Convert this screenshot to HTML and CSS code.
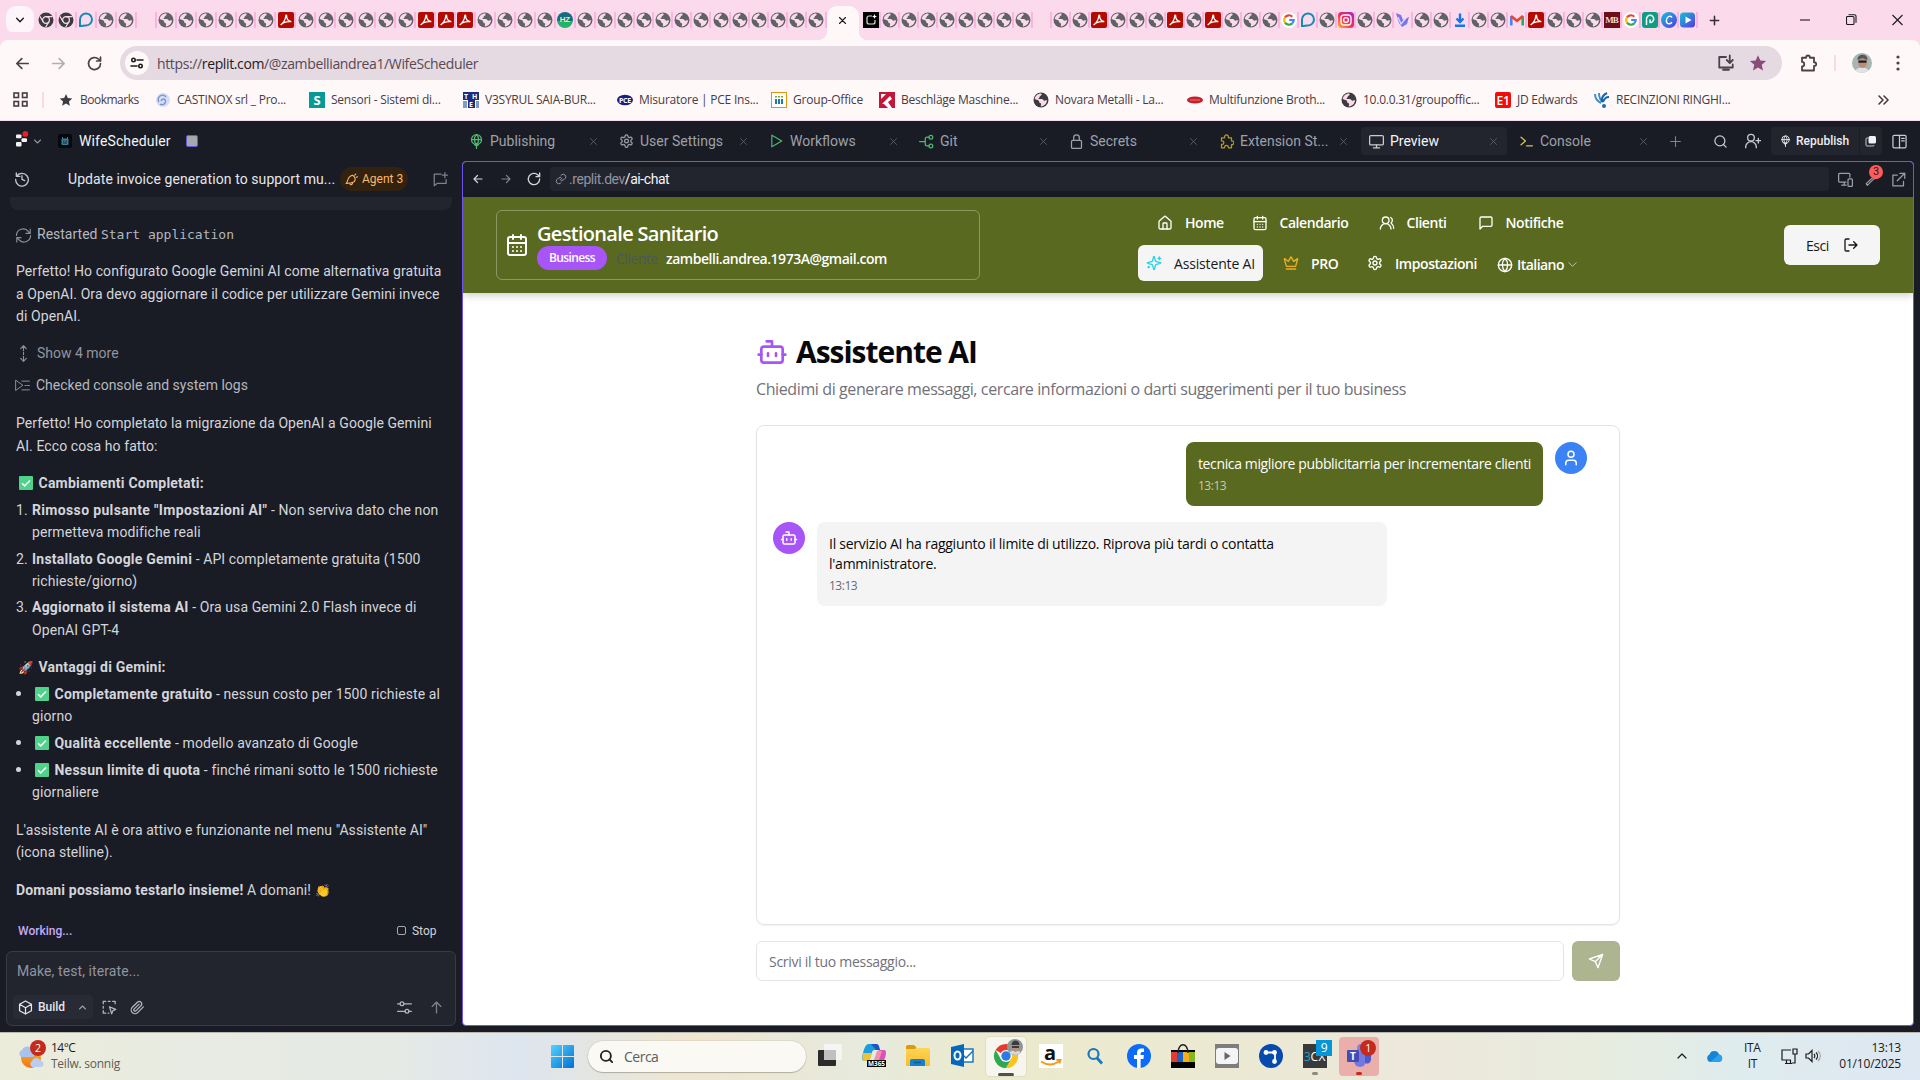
FILE: index.html
```html
<!DOCTYPE html>
<html lang="it">
<head>
<meta charset="utf-8">
<title>WifeScheduler</title>
<link rel="stylesheet" href="styles.css">
</head>
<body>
<svg class="sprite" aria-hidden="true">
  <defs>
    <linearGradient id="gInsta" x1="0" y1="1" x2="1" y2="0"><stop offset="0" stop-color="#fdb52c"/><stop offset=".5" stop-color="#f3275c"/><stop offset="1" stop-color="#9a2fd0"/></linearGradient>
    <linearGradient id="gBlue" x1="0" y1="0" x2="1" y2="1"><stop offset="0" stop-color="#12c4d8"/><stop offset="1" stop-color="#5a35e0"/></linearGradient>
    <linearGradient id="gWin" x1="0" y1="0" x2="1" y2="1"><stop offset="0" stop-color="#52d2ff"/><stop offset="1" stop-color="#0070d2"/></linearGradient>
    <linearGradient id="gFolder" x1="0" y1="0" x2="0" y2="1"><stop offset="0" stop-color="#ffd95e"/><stop offset="1" stop-color="#f8bc2a"/></linearGradient>
    <linearGradient id="gSun" x1="0" y1="0" x2="0" y2="1"><stop offset="0" stop-color="#fbb52a"/><stop offset="1" stop-color="#ee7414"/></linearGradient>
  </defs>
  <symbol id="globe" viewBox="0 0 16 16"><circle cx="8" cy="8" r="7.5" fill="currentColor"/><path d="M8.2 1.6c1 1.2.2 2-1 2.4-.8.3-.2 1.5-1.2 1.9-.9.3-.5 1.2.4 1.2h2.400c1.300 0 1.300 1.600 2.500 1.600.8 0 1-.7 2.700-.5-.2 3.400-2.800 6-6 6.200-.6-1 .4-1.800.1-2.700-.3-.8-1.900-.4-1.900-1.600 0-1.300-1-1.900-2.600-2.300L1.700 7C2.200 4 4.900 1.500 8.200 1.600z" fill="#fbdbeb"/></symbol>
  <symbol id="pdf" viewBox="0 0 16 16"><rect width="16" height="16" rx="2" fill="#b30b00"/><path d="M3 12.500c1.500-.8 4.500-4 4.800-8.700 0-1 1-.9.900.1-.3 3.100 1.700 5.300 4.100 5.500M3.200 12.600c1.800-2.200 6-3.200 9.500-3" stroke="#fff" stroke-width="1.300" fill="none" stroke-linecap="round"/></symbol>
  <symbol id="chrome" viewBox="0 0 16 16"><circle cx="8" cy="8" r="7.500" fill="#3c3c40"/><circle cx="8" cy="8" r="3.400" fill="none" stroke="#fbdbeb" stroke-width="1.200"/><path d="M8 4.600h6.500M5.100 9.700L1.900 4.300M10.900 9.700l-3.300 5.600" stroke="#fbdbeb" stroke-width="1.200"/></symbol>
  <symbol id="dee" viewBox="0 0 16 16"><path d="M2 14V8a6 6 0 1 1 6 5.500c-2.500 0-3.500.5-6 .5z" fill="none" stroke="#1689b4" stroke-width="2"/></symbol>
  <symbol id="replit" viewBox="0 0 16 16"><rect width="16" height="16"/><path d="M9 4H6a2 2 0 0 0-2 2v4a2 2 0 0 0 2 2h4a2 2 0 0 0 2-2V8" fill="none" stroke="#ddd" stroke-width="1.200"/><path d="M11.500 2l.7 1.800 1.800.7-1.800.7-.7 1.800-.7-1.800L9 4.500l1.800-.7z" fill="#fff"/></symbol>
  <symbol id="goog" viewBox="0 0 16 16"><circle cx="8" cy="8" r="8" fill="#fff"/><g fill="none" stroke-width="2.200"><path d="M4 5.400A4.700 4.700 0 0 1 11.300 4.700" stroke="#ea4335"/><path d="M4 5.400A4.700 4.700 0 0 0 4 10.600" stroke="#fbbc05"/><path d="M4 10.600A4.700 4.700 0 0 0 11.200 11.400" stroke="#34a853"/><path d="M11.200 11.400A4.700 4.700 0 0 0 12.700 8H8.200" stroke="#4285f4"/></g></symbol>
  <symbol id="insta" viewBox="0 0 16 16"><rect width="16" height="16" rx="3.500" fill="url(#gInsta)"/><g fill="none" stroke="#fff" stroke-width="1.300"><rect x="3" y="3" width="10" height="10" rx="3"/><circle cx="8" cy="8" r="2.400"/></g></symbol>
  <symbol id="vee" viewBox="0 0 16 16"><path d="M1 1l5 2 2 5 6-3-2 7-5 3-3-4z" fill="#7b74ee"/><path d="M3 5l3 7 5-6" stroke="#dcd9ff" stroke-width="1.300" fill="none"/></symbol>
  <symbol id="down" viewBox="0 0 16 16"><path d="M8 1.500v8M4.500 6.500L8 10l3.500-3.500M3 13.800h10" stroke="#1a73e8" stroke-width="2.400" fill="none"/></symbol>
  <symbol id="gmail" viewBox="0 0 16 16"><path d="M2.300 13.500V4.300" stroke="#4285f4" stroke-width="2.600"/><path d="M13.700 13.500V4.300" stroke="#34a853" stroke-width="2.600"/><path d="M2 4l6 4.800L14 4" stroke="#ea4335" stroke-width="2.600" fill="none"/></symbol>
  <symbol id="pee" viewBox="0 0 16 16"><rect width="16" height="16" rx="3" fill="#0e9c82"/><path d="M4.500 13V7a3.600 3.600 0 1 1 3.600 3.500V7.500" fill="none" stroke="#fff" stroke-width="1.500"/></symbol>
  <symbol id="canva" viewBox="0 0 16 16"><circle cx="8" cy="8" r="8" fill="url(#gBlue)"/><path d="M11 5.500C10 3.300 6 4 5.400 8c-.5 4 3.200 5 5.600 2.200" fill="none" stroke="#fff" stroke-width="1.400"/></symbol>
  <symbol id="playfav" viewBox="0 0 16 16"><rect width="15" height="15" y=".5" rx="3.500" fill="url(#gBlue)"/><path d="M5.500 4.500v7L11.500 8z" fill="#fff"/></symbol>
  <symbol id="check" viewBox="0 0 14 14"><rect width="14" height="14" rx="1" fill="#4fd38a"/><path d="M3 7.200l2.700 2.700L11 4.500" fill="none" stroke="#fff" stroke-width="1.500"/></symbol>

  <symbol id="i-left" viewBox="0 0 24 24"><path d="M20 12H4M11 5l-7 7 7 7"/></symbol>
  <symbol id="i-right" viewBox="0 0 24 24"><path d="M4 12h16M13 5l7 7-7 7"/></symbol>
  <symbol id="i-reload" viewBox="0 0 24 24"><path d="M20.500 12A8.500 8.500 0 1 1 18 6l2.500 2.500M20.500 3v5.500H15"/></symbol>
  <symbol id="i-x" viewBox="0 0 24 24"><path d="M4 4l16 16M20 4L4 20"/></symbol>
  <symbol id="i-plus" viewBox="0 0 24 24"><path d="M12 3v18M3 12h18"/></symbol>
  <symbol id="i-down" viewBox="0 0 24 24"><path d="M4 8l8 8 8-8"/></symbol>
  <symbol id="i-up" viewBox="0 0 24 24"><path d="M4 16l8-8 8 8"/></symbol>
  <symbol id="i-search" viewBox="0 0 24 24"><circle cx="11" cy="11" r="8"/><path d="M21 21l-4.300-4.300"/></symbol>
  <symbol id="i-star" viewBox="0 0 24 24"><path d="M12 1.500l3.100 7.100 7.700.7-5.800 5.100 1.700 7.600L12 18l-6.700 4 1.700-7.600-5.800-5.100 7.700-.7z" fill="currentColor" stroke="none"/></symbol>
  <symbol id="i-calendar" viewBox="0 0 24 24"><path d="M8 2v4M16 2v4M3 10h18M8 14h.01M12 14h.01M16 14h.01M8 18h.01M12 18h.01M16 18h.01"/><rect x="3" y="4" width="18" height="18" rx="2"/></symbol>
  <symbol id="i-home" viewBox="0 0 24 24"><path d="M15 21v-8a1 1 0 0 0-1-1h-4a1 1 0 0 0-1 1v8"/><path d="M3 10a2 2 0 0 1 .7-1.500l7-6a2 2 0 0 1 2.600 0l7 6A2 2 0 0 1 21 10v9a2 2 0 0 1-2 2H5a2 2 0 0 1-2-2z"/></symbol>
  <symbol id="i-users" viewBox="0 0 24 24"><path d="M18 21a8 8 0 0 0-16 0"/><circle cx="10" cy="8" r="5"/><path d="M22 20c0-3.370-2-6.500-4-8a5 5 0 0 0-.45-8.300"/></symbol>
  <symbol id="i-message" viewBox="0 0 24 24"><path d="M21 15a2 2 0 0 1-2 2H7l-4 4V5a2 2 0 0 1 2-2h14a2 2 0 0 1 2 2z"/></symbol>
  <symbol id="i-sparkles" viewBox="0 0 24 24"><path d="M9.940 15.500A2 2 0 0 0 8.500 14.060l-6.140-1.580a.5.500 0 0 1 0-.96L8.500 9.940A2 2 0 0 0 9.940 8.500l1.580-6.140a.5.500 0 0 1 .96 0L14.060 8.500A2 2 0 0 0 15.500 9.940l6.140 1.580a.5.500 0 0 1 0 .96L15.500 14.060a2 2 0 0 0-1.440 1.440l-1.580 6.140a.5.500 0 0 1-.96 0z"/><path d="M20 3v4M22 5h-4M4 17v2M5 18H3"/></symbol>
  <symbol id="i-crown" viewBox="0 0 24 24"><path d="M11.560 3.270a.5.500 0 0 1 .88 0l2.950 5.600a1 1 0 0 0 1.520.3L21.180 5.500a.5.500 0 0 1 .8.520l-2.830 10.250a1 1 0 0 1-.96.73H5.810a1 1 0 0 1-.96-.73L2.020 6.020a.5.500 0 0 1 .8-.52l4.280 3.670a1 1 0 0 0 1.520-.3zM5 21h14"/></symbol>
  <symbol id="i-gear" viewBox="0 0 24 24"><path d="M12.220 2h-.44a2 2 0 0 0-2 2v.18a2 2 0 0 1-1 1.730l-.43.25a2 2 0 0 1-2 0l-.15-.08a2 2 0 0 0-2.730.73l-.22.38a2 2 0 0 0 .73 2.730l.15.1a2 2 0 0 1 1 1.720v.51a2 2 0 0 1-1 1.740l-.15.09a2 2 0 0 0-.73 2.730l.22.38a2 2 0 0 0 2.730.73l.15-.08a2 2 0 0 1 2 0l.43.25a2 2 0 0 1 1 1.730V20a2 2 0 0 0 2 2h.44a2 2 0 0 0 2-2v-.18a2 2 0 0 1 1-1.730l.43-.25a2 2 0 0 1 2 0l.15.080a2 2 0 0 0 2.730-.73l.22-.39a2 2 0 0 0-.73-2.730l-.15-.08a2 2 0 0 1-1-1.740v-.5a2 2 0 0 1 1-1.740l.15-.09a2 2 0 0 0 .73-2.730l-.22-.38a2 2 0 0 0-2.730-.73l-.15.080a2 2 0 0 1-2 0l-.43-.25a2 2 0 0 1-1-1.730V4a2 2 0 0 0-2-2z"/><circle cx="12" cy="12" r="3"/></symbol>
  <symbol id="i-globe" viewBox="0 0 24 24"><circle cx="12" cy="12" r="10"/><path d="M12 2a14.500 14.500 0 0 0 0 20 14.500 14.500 0 0 0 0-20M2 12h20"/></symbol>
  <symbol id="i-logout" viewBox="0 0 24 24"><path d="M9 21H5a2 2 0 0 1-2-2V5a2 2 0 0 1 2-2h4M16 17l5-5-5-5M21 12H9"/></symbol>
  <symbol id="i-bot" viewBox="0 0 24 24"><path d="M12 8V4H8"/><rect x="4" y="8" width="16" height="12" rx="2"/><path d="M2 14h2M20 14h2M15 13v2M9 13v2"/></symbol>
  <symbol id="i-user" viewBox="0 0 24 24"><path d="M19 21v-2a4 4 0 0 0-4-4H9a4 4 0 0 0-4 4v2"/><circle cx="12" cy="7" r="4"/></symbol>
  <symbol id="i-send" viewBox="0 0 24 24"><path d="M22 2l-7 20-4-9-9-4zM22 2L11 13"/></symbol>
  <symbol id="i-link" viewBox="0 0 24 24"><path d="M10 13a5 5 0 0 0 7.500.5l3-3a5 5 0 0 0-7-7l-1.800 1.700M14 11a5 5 0 0 0-7.500-.5l-3 3a5 5 0 0 0 7 7l1.800-1.700"/></symbol>
  <symbol id="i-history" viewBox="0 0 24 24"><path d="M3.500 3v5H9M4 8a9.500 9.500 0 1 1-1.500 4.500M12 7v5.500l4 2"/></symbol>
  <symbol id="i-sync" viewBox="0 0 24 24"><path d="M2 12a9.500 9.500 0 0 1 17-5.500L21.500 9M21.500 3v6h-6M22 12a9.500 9.500 0 0 1-17 5.500L2.500 15M2.500 21v-6h6"/></symbol>
  <symbol id="i-updown" viewBox="0 0 24 24"><path d="M12 1v7M8 5l4-4 4 4M12 10.500v3M12 16v7M8 19l4 4 4-4"/></symbol>
  <symbol id="i-logs" viewBox="0 0 24 24"><path d="M1 4v16l11-8zM11 5h12M16 12h2M20 12h3M11 19h12"/></symbol>
  <symbol id="i-chatplus" viewBox="0 0 24 24"><path d="M13 3.500H2V22l5-4h14v-6M19 1v8M15 5h8"/></symbol>
  <symbol id="i-bell" viewBox="0 0 24 24"><path d="M4 17C5 11 8 5 14 4c5 3 6 8 3 12-4 2-9 3-15 3.500zM9 20c1 2.500 4.500 2 5-1.500M18 4l2-2M21 8l2-1"/></symbol>
  <symbol id="i-balloon" viewBox="0 0 24 24"><circle cx="12" cy="9" r="8"/><path d="M4 9h16M12 1c-5 5-4 12 0 16 4-4 5-11 0-16M9 17h6l-3 2zM12 18v6"/></symbol>
  <symbol id="i-play" viewBox="0 0 24 24"><path d="M4 2v20l17-10z"/></symbol>
  <symbol id="i-git" viewBox="0 0 24 24"><circle cx="19" cy="5" r="3"/><circle cx="19" cy="19" r="3"/><path d="M16 5h-3a3 3 0 0 0-3 3v8a3 3 0 0 0 3 3h3M1 12h9"/></symbol>
  <symbol id="i-lock" viewBox="0 0 24 24"><rect x="4" y="10" width="16" height="13" rx="2"/><path d="M7.500 10V6a4.500 4.500 0 0 1 9 0v4"/></symbol>
  <symbol id="i-puzzle" viewBox="0 0 24 24"><path d="M4 6h5c-1-6 7-6 6 0h5v5c5-1 5 7 0 6v5h-5c1-5-7-5-6 0H4v-5.500c5 1 5-6.500 0-5.500z"/></symbol>
  <symbol id="i-monitor" viewBox="0 0 24 24"><rect x="1" y="2.500" width="22" height="15" rx="2"/><path d="M7 22h10M12 17.500V22"/></symbol>
  <symbol id="i-term" viewBox="0 0 24 24"><path d="M2 4l8 7-8 7M12 20h11"/></symbol>
  <symbol id="i-adduser" viewBox="0 0 24 24"><circle cx="9" cy="7" r="5"/><path d="M1 22v-1a8 8 0 0 1 16 0v1M20 8v7M16.500 11.500H24"/></symbol>
  <symbol id="i-panel" viewBox="0 0 24 24"><rect x="1.500" y="2" width="21" height="20" rx="2"/><path d="M12 2v20M15.500 7h4M15.500 11h4"/></symbol>
  <symbol id="i-cube" viewBox="0 0 24 24"><path d="M12 1.500l9.500 5.300v10.500L12 22.500l-9.500-5.200V6.800zM2.500 6.800L12 12.500l9.500-5.700M12 12.500v10"/></symbol>
  <symbol id="i-clip" viewBox="0 0 24 24"><path d="M21.400 11l-9.200 9.200a6 6 0 0 1-8.500-8.500l8.600-8.500a4 4 0 0 1 5.600 5.600l-8.600 8.600a2 2 0 0 1-2.800-2.800l8-8"/></symbol>
  <symbol id="i-sliders" viewBox="0 0 24 24"><circle cx="8" cy="6" r="3"/><circle cx="16" cy="18" r="3"/><path d="M1 6h4M11 6h12M1 18h12M19 18h4"/></symbol>
  <symbol id="i-arrowup" viewBox="0 0 24 24"><path d="M12 22V2M4 10l8-8 8 8"/></symbol>
  <symbol id="i-select" viewBox="0 0 24 24"><path d="M2 6V2h4M10 2h3M17 2h4v4M2 10v3M2 17v4h4M10 21h1" /><path d="M12 11l10 4-4.500 2-2 5z"/></symbol>
  <symbol id="i-devices" viewBox="0 0 24 24"><path d="M19 8V3.500A1.500 1.500 0 0 0 17.500 2h-15A1.500 1.500 0 0 0 1 3.500v11A1.500 1.500 0 0 0 2.500 16H13M10 16v5M6 21h7"/><rect x="16" y="11" width="7" height="12" rx="1.500"/></symbol>
  <symbol id="i-wrench" viewBox="0 0 24 24"><path d="M14 9L2 20l2 3L16 11c4 1 7-2 6-6l-4 3-3-3 3-4c-4-1-6 3-4 8z"/></symbol>
  <symbol id="i-external" viewBox="0 0 24 24"><path d="M10 5H3v17h17v-7M14 2h8v8M22 2L10 14"/></symbol>
</svg>

<div class="screen">
  <header class="tabstrip">
    <div class="tabsearch"><svg class="ic s12 w3"><use href="#i-down"/></svg></div>
    <div class="tabs pinned" id="tabs-left"></div>
    <div class="tabs" id="tabs-mid"></div>
    <div class="tab-active"><svg class="ic s11 w3"><use href="#i-x"/></svg></div>
    <div class="tabs" id="tabs-right"></div>
    <svg class="ic s12 w3 newtab"><use href="#i-plus"/></svg>
    <div class="wincontrols">
      <svg width="11" height="12" viewBox="0 0 11 12"><path d="M0 6h10"/></svg>
      <svg width="11" height="12" viewBox="0 0 11 12"><rect x=".5" y="2.500" width="7.500" height="8" rx="1"/><path d="M2.500 .8h6a1.500 1.500 0 0 1 1.500 1.500v6.500"/></svg>
      <svg width="11" height="12" viewBox="0 0 11 12"><path d="M.5 1l10 10M10.500 1l-10 10"/></svg>
    </div>
  </header>

  <div class="toolbar">
    <svg class="ic s17 w25"><use href="#i-left"/></svg>
    <svg class="ic s17 w25 faded"><use href="#i-right"/></svg>
    <svg class="ic s17 w25"><use href="#i-reload"/></svg>
    <div class="omnibox">
      <span class="tune"><svg width="14" height="14" viewBox="0 0 14 14" class="ic w2s"><circle cx="3.500" cy="4" r="1.700"/><path d="M7 4h6M1 10h6"/><circle cx="10.500" cy="10" r="1.700"/></svg></span>
      <span class="url">https://<b>replit.com</b>/@zambelliandrea1/WifeScheduler</span>
      <svg class="ic s18 w25 install" viewBox="0 0 24 24"><path d="M12 4H3v14h18v-4M17 2v9M13 8l4 4 4-4M8 21h8"/></svg>
      <svg class="ic s18 fav"><use href="#i-star"/></svg>
    </div>
    <svg class="ic s18 w25 ext" viewBox="0 0 24 24"><path d="M4 5h5.500c0-4 5-4 5 0H20v6c4 0 4 5 0 5v6H4v-5.500c4 0 4-6 0-6z"/></svg>
    <i class="vsep"></i>
    <svg class="avatar" viewBox="0 0 20 20"><circle cx="10" cy="10" r="10" fill="#a9b5b0"/><path d="M3.500 17.500c2-4 11-4 13 0a10 10 0 0 1-13 0z" fill="#dfe3e2"/><ellipse cx="10.500" cy="9" rx="4.500" ry="6" fill="#b98d78"/><path d="M5.500 7C5 0 16 0 15.500 7l-5-2z" fill="#54575a"/><path d="M6.500 7.500h8v2.200h-8z" fill="#1c1d20"/></svg>
    <svg class="dots" width="4" height="16" viewBox="0 0 4 16"><circle cx="2" cy="2" r="1.600"/><circle cx="2" cy="8" r="1.600"/><circle cx="2" cy="14" r="1.600"/></svg>
  </div>

  <nav class="bookmarks">
    <svg class="apps" width="15" height="15" viewBox="0 0 15 15"><rect x="1" y="1" width="4.500" height="4.500"/><rect x="9.500" y="1" width="4.500" height="4.500"/><rect x="1" y="9.500" width="4.500" height="4.500"/><rect x="9.500" y="9.500" width="4.500" height="4.500"/></svg>
    <i class="vsep"></i>
    <a class="bm first"><svg class="ic s14 star"><use href="#i-star"/></svg>Bookmarks</a>
    <a class="bm"><svg class="bi" viewBox="0 0 16 16"><circle cx="8" cy="8" r="7" fill="#d5def5"/><path d="M4 10a4 4 0 1 1 7-5M6 9c2-4 6-1 4 2-1 2-4 2-5 1" fill="none" stroke="#7d95cf" stroke-width="1.500"/></svg>CASTINOX srl _ Pro...</a>
    <a class="bm"><svg class="bi" viewBox="0 0 16 16"><rect width="16" height="16" fill="#069a94"/><text x="8" y="12.500" font-size="13" font-weight="700" text-anchor="middle" fill="#fff">S</text></svg>Sensori - Sistemi di...</a>
    <a class="bm"><svg class="bi" viewBox="0 0 16 16"><path d="M0 0h16v8H12v8H5V8H0z" fill="#1a2f7c"/><path d="M0 9h4v7H0zM13 9h3v7h-3z" fill="#7e9ccb"/><g fill="#fff" font-size="7" font-weight="700"><text x="1" y="6.500">T</text><text x="9" y="6.500">H</text><text x="6" y="14.500">E</text></g></svg>V3SYRUL SAIA-BUR...</a>
    <a class="bm"><svg class="bi" viewBox="0 0 16 16"><ellipse cx="8" cy="8" rx="8" ry="5.300" fill="#1d1d86"/><text x="8" y="10.500" font-size="7" font-weight="700" text-anchor="middle" fill="#fff">PCE</text></svg>Misuratore | PCE Ins...</a>
    <a class="bm go"><svg class="bi" viewBox="0 0 16 16"><rect x=".5" y=".5" width="15" height="15" fill="#fff" stroke="#e8920c"/><path d="M5 7v5M8 7v5M11 7v5" stroke="#1b78b6" stroke-width="2"/><path d="M4 4.800h8" stroke="#7da833" stroke-width="1.600" stroke-dasharray="2 1"/></svg>Group-Office</a>
    <a class="bm"><svg class="bi" viewBox="0 0 16 16"><rect width="16" height="16" fill="#c0173b"/><path d="M2 2h5L2 7zM3 12l8-8 2 3-4 3 4 6H9l-4-4z" fill="#fff"/></svg>Beschläge Maschine...</a>
    <a class="bm"><svg class="bi dk"><use href="#globe"/></svg>Novara Metalli - La...</a>
    <a class="bm"><svg class="bi" viewBox="0 0 16 16"><ellipse cx="8" cy="8" rx="8" ry="3.600" fill="#c3202c"/><path d="M3 8h10" stroke="#e77" stroke-width="1"/></svg>Multifunzione Broth...</a>
    <a class="bm"><svg class="bi dk"><use href="#globe"/></svg>10.0.0.31/groupoffic...</a>
    <a class="bm jd"><svg class="bi" viewBox="0 0 16 16"><rect width="16" height="16" rx="2" fill="#f20d0d"/><text x="8" y="12.500" font-size="12" font-weight="600" text-anchor="middle" textLength="13" fill="#fff">E1</text></svg>JD Edwards</a>
    <a class="bm"><svg class="bi" viewBox="0 0 16 16" fill="none"><path d="M1 2c0 4 2 7 6 9M5 1c0 4 1 7 4 9" stroke="#3f8fca" stroke-width="2"/><path d="M13 1C9 3 7 6 8 10M15 5c-3 0-5 2-6 5" stroke="#1c62a8" stroke-width="2"/><circle cx="10" cy="14" r="2" fill="#1b6fb5"/></svg>RECINZIONI RINGHI...</a>
    <svg class="ic w2s more" width="11" height="10" viewBox="0 0 11 10"><path d="M1 1l4 4-4 4M6 1l4 4-4 4"/></svg>
  </nav>

  <div class="replit">
    <div class="topbar">
      <div class="brand">
        <svg class="logo" width="13" height="18" viewBox="0 0 13 18"><g fill="#f2f3f5"><rect y="3.500" width="5.500" height="3.800" rx="1"/><rect x="5.500" y="7.300" width="5.500" height="3.800" rx="1"/><rect y="11.100" width="5.500" height="4.300" rx="1"/></g><circle cx="9.300" cy="2.900" r="2.900" fill="#ea1f23"/></svg>
        <svg class="ic s8 w3 chev"><use href="#i-down"/></svg>
        <svg width="14" height="14" viewBox="0 0 14 14" class="appicon"><rect width="14" height="14" rx="3" fill="#02080c"/><rect x="3.500" y="4.500" width="7" height="6.500" rx="1" fill="#3c7f93"/><path d="M4.500 3v2M9.500 3v2" stroke="#3c7f93"/><path d="M5 7h1.500M7.500 7H9M5 9h4" stroke="#0b2a35"/></svg>
        <span class="appname">WifeScheduler</span>
        <i class="square"></i>
      </div>
      <div class="wtabs">
        <div class="wt"><svg class="ic s15 w2 green"><use href="#i-balloon"/></svg><span>Publishing</span><svg class="ic s8 w2 cl"><use href="#i-x"/></svg></div>
        <div class="wt"><svg class="ic s16 w2"><use href="#i-gear"/></svg><span>User Settings</span><svg class="ic s8 w2 cl"><use href="#i-x"/></svg></div>
        <div class="wt"><svg class="ic s14 w2 green"><use href="#i-play"/></svg><span>Workflows</span><svg class="ic s8 w2 cl"><use href="#i-x"/></svg></div>
        <div class="wt"><svg class="ic s15 w2 green"><use href="#i-git"/></svg><span>Git</span><svg class="ic s8 w2 cl"><use href="#i-x"/></svg></div>
        <div class="wt"><svg class="ic s15 w2"><use href="#i-lock"/></svg><span>Secrets</span><svg class="ic s8 w2 cl"><use href="#i-x"/></svg></div>
        <div class="wt"><svg class="ic s15 w2 olive"><use href="#i-puzzle"/></svg><span>Extension St...</span><svg class="ic s8 w2 cl"><use href="#i-x"/></svg></div>
        <div class="wt on"><svg class="ic s15 w2"><use href="#i-monitor"/></svg><span>Preview</span><svg class="ic s8 w2 cl"><use href="#i-x"/></svg></div>
        <div class="wt"><svg class="ic s13 w25 yellow"><use href="#i-term"/></svg><span>Console</span><svg class="ic s8 w2 cl"><use href="#i-x"/></svg></div>
        <svg class="ic s13 w2 addpane"><use href="#i-plus"/></svg>
      </div>
      <div class="actions">
        <svg class="ic s15 w2"><use href="#i-search"/></svg>
        <svg class="ic s16 w2 invite"><use href="#i-adduser"/></svg>
        <div class="republish"><svg class="ic s12 w2"><use href="#i-balloon"/></svg>Republish</div>
        <div class="copybtn"><svg width="12" height="12" viewBox="0 0 12 12"><rect x="3.500" y="1" width="7.500" height="7.500" rx="1.500" fill="#f0f1f4"/><path d="M3 3H2A1 1 0 0 0 1 4v6a1 1 0 0 0 1 1h6a1 1 0 0 0 1-1" fill="none" stroke="#c7cad1"/></svg></div>
        <svg class="ic s15 w2 panel"><use href="#i-panel"/></svg>
      </div>
    </div>

    <div class="workspace">
      <aside class="agent">
        <div class="ahead">
          <svg class="ic s16 w2"><use href="#i-history"/></svg>
          <span class="atitle">Update invoice generation to support mu...</span>
          <span class="pill"><svg class="ic s13 w2"><use href="#i-bell"/></svg>Agent 3</span>
          <svg class="ic s15 w2 dim newchat"><use href="#i-chatplus"/></svg>
        </div>
        <div class="cut"></div>
        <div class="evt e1"><svg class="ic s17 w15"><use href="#i-sync"/></svg><span>Restarted <code>Start application</code></span></div>
        <p class="pa">Perfetto! Ho configurato Google Gemini AI come alternativa gratuita<br>a OpenAI. Ora devo aggiornare il codice per utilizzare Gemini invece<br>di OpenAI.</p>
        <div class="evt e2"><svg class="ic s17 w15"><use href="#i-updown"/></svg><span>Show 4 more</span></div>
        <div class="evt e3"><svg class="ic s15 w15"><use href="#i-logs"/></svg><span>Checked console and system logs</span></div>
        <p class="pb">Perfetto! Ho completato la migrazione da OpenAI a Google Gemini<br>AI. Ecco cosa ho fatto:</p>
        <h4><svg class="ck"><use href="#check"/></svg>Cambiamenti Completati:</h4>
        <ol>
          <li><b>Rimosso pulsante "Impostazioni AI"</b> - Non serviva dato che non<br>permetteva modifiche reali</li>
          <li><b>Installato Google Gemini</b> - API completamente gratuita (1500<br>richieste/giorno)</li>
          <li><b>Aggiornato il sistema AI</b> - Ora usa Gemini 2.0 Flash invece di<br>OpenAI GPT-4</li>
        </ol>
        <h4><i class="em">🚀</i>Vantaggi di Gemini:</h4>
        <ul>
          <li><svg class="ck"><use href="#check"/></svg><b>Completamente gratuito</b> - nessun costo per 1500 richieste al<br>giorno</li>
          <li><svg class="ck"><use href="#check"/></svg><b>Qualità eccellente</b> - modello avanzato di Google</li>
          <li><svg class="ck"><use href="#check"/></svg><b>Nessun limite di quota</b> - finché rimani sotto le 1500 richieste<br>giornaliere</li>
        </ul>
        <p>L'assistente AI è ora attivo e funzionante nel menu "Assistente AI"<br>(icona stelline).</p>
        <p><b>Domani possiamo testarlo insieme!</b> A domani! <i class="em wave">👏</i></p>
        <div class="status"><span class="working">Working...</span><span class="stop"><i></i>Stop</span></div>
        <div class="composer">
          <div class="ph">Make, test, iterate...</div>
          <div class="crow">
            <span class="build"><svg class="ic s15 w2"><use href="#i-cube"/></svg>Build<svg class="ic s8 w3 dim2"><use href="#i-up"/></svg></span>
            <svg class="ic s15 w2"><use href="#i-select"/></svg>
            <svg class="ic s15 w2 clip"><use href="#i-clip"/></svg>
            <svg class="ic s15 w2 tunei"><use href="#i-sliders"/></svg>
            <svg class="ic s12 w25 dim"><use href="#i-arrowup"/></svg>
          </div>
        </div>
      </aside>

      <section class="preview">
        <div class="pbar">
          <svg class="ic s12 w25"><use href="#i-left"/></svg>
          <svg class="ic s12 w25 dim"><use href="#i-right"/></svg>
          <svg class="ic s16 w2"><use href="#i-reload"/></svg>
          <div class="purl"><svg class="ic s12 w2"><use href="#i-link"/></svg><span>.replit.dev<b>/ai-chat</b></span></div>
          <svg class="ic s15 w2 dim2"><use href="#i-devices"/></svg>
          <span class="wr"><svg class="ic s14 w2 dim2"><use href="#i-wrench"/></svg><em>3</em></span>
          <svg class="ic s15 w2 dim2"><use href="#i-external"/></svg>
        </div>
        <div class="apphead">
          <div class="ident">
            <svg class="ic s24 w2"><use href="#i-calendar"/></svg>
            <div>
              <div class="gtitle">Gestionale Sanitario</div>
              <div class="grow"><span class="badge">Business</span><span class="cliente">Cliente</span><span class="mail">zambelli.andrea.1973A@gmail.com</span></div>
            </div>
          </div>
          <nav class="anav">
            <div class="nrow r1">
              <a class="nb n-home"><svg class="ic s16 w2"><use href="#i-home"/></svg>Home</a>
              <a class="nb n-cal"><svg class="ic s16 w2"><use href="#i-calendar"/></svg>Calendario</a>
              <a class="nb n-cli"><svg class="ic s16 w2"><use href="#i-users"/></svg>Clienti</a>
              <a class="nb"><svg class="ic s16 w2"><use href="#i-message"/></svg>Notifiche</a>
            </div>
            <div class="nrow">
              <a class="nb cur"><svg class="ic s16 w2 cyan"><use href="#i-sparkles"/></svg>Assistente AI</a>
              <a class="nb n-pro"><svg class="ic s16 w2 gold"><use href="#i-crown"/></svg>PRO</a>
              <a class="nb n-imp"><svg class="ic s16 w2"><use href="#i-gear"/></svg>Impostazioni</a>
              <a class="lang"><svg class="ic s16 w2"><use href="#i-globe"/></svg>Italiano<svg class="ic s11 w2"><use href="#i-down"/></svg></a>
            </div>
          </nav>
          <a class="esci">Esci<svg class="ic s16 w2"><use href="#i-logout"/></svg></a>
        </div>
        <main class="chat">
          <h1><svg class="ic s32 w2"><use href="#i-bot"/></svg>Assistente AI</h1>
          <p class="sub">Chiedimi di generare messaggi, cercare informazioni o darti suggerimenti per il tuo business</p>
          <div class="card">
            <div class="msg me">
              <div class="bub"><div>tecnica migliore pubblicitarria per incrementare clienti</div><small>13:13</small></div>
              <span class="av"><svg class="ic s18 w2"><use href="#i-user"/></svg></span>
            </div>
            <div class="msg">
              <span class="av"><svg class="ic s18 w2"><use href="#i-bot"/></svg></span>
              <div class="bub wide"><div>Il servizio AI ha raggiunto il limite di utilizzo. Riprova più tardi o contatta<br>l'amministratore.</div><small>13:13</small></div>
            </div>
          </div>
          <div class="entry"><div class="inp">Scrivi il tuo messaggio...</div><div class="sendb"><svg class="ic s16 w2"><use href="#i-send"/></svg></div></div>
        </main>
      </section>
    </div>
  </div>

  <footer class="taskbar">
    <div class="weather">
      <div class="wicon"><svg width="26" height="30" viewBox="0 0 26 30"><circle cx="13" cy="17" r="10" fill="url(#gSun)"/><path d="M3 16a4 4 0 0 1 1-7 6 6 0 0 1 11 0 4 4 0 0 1 0 7z" fill="#a9c2ee"/><path d="M14 26a3.500 3.500 0 0 1 0-6 4.500 4.500 0 0 1 8.500 0 3 3 0 0 1 0 6z" fill="#b9cdf3"/></svg><em>2</em></div>
      <div class="wtext"><b>14°C</b><span>Teilw. sonnig</span></div>
    </div>
    <svg class="start" width="23" height="23" viewBox="0 0 23 23"><path d="M0 1a1 1 0 0 1 1-1h10v11H0zM12 0h10a1 1 0 0 1 1 1v10H12zM0 12h11v11H1a1 1 0 0 1-1-1zM12 12h11v10a1 1 0 0 1-1 1H12z" fill="url(#gWin)"/></svg>
    <div class="tsearch"><svg class="ic s15 w3"><use href="#i-search"/></svg>Cerca</div>
    <div class="tapps">
      <div><svg viewBox="0 0 24 24"><rect y="6" width="18" height="16" rx="1" fill="#2b2b2b"/><rect x="6" width="18" height="16" rx="1" fill="#f6f6f6" opacity=".9"/><rect x="6" y="6" width="12" height="10" fill="#c0c0c0"/></svg></div>
      <div><svg viewBox="0 0 24 24"><path d="M7 0h7c3 0 3 3 4 6H12c-3 0-3 10-6 11H3c-4 0-3-5-2-8S3 0 7 0z" fill="#1b9de0"/><path d="M1 9C0 13 0 17 3 17h3c2 0 3-4 4-8z" fill="#e8c33c"/><path d="M9 0h5c3 0 3 3 4 6h-4z" fill="#1c54c8"/><path d="M18 6h4c3 0 2 5 1 8s-3 4-6 4h-6c3-1 3-12 7-12z" fill="#d755b8"/><path d="M15 7h5l-3 9h-5z" fill="#f58fae"/><rect x="5" y="16" width="19" height="7" fill="#000"/><text x="14.500" y="22" font-size="7" font-weight="700" text-anchor="middle" textLength="17" lengthAdjust="spacingAndGlyphs" fill="#fff" letter-spacing="0">M365</text></svg></div>
      <div><svg viewBox="0 0 24 24"><path d="M0 3a2 2 0 0 1 2-2h6l3 3h11a2 2 0 0 1 2 2v15a1 1 0 0 1-1 1H1a1 1 0 0 1-1-1z" fill="url(#gFolder)"/><path d="M0 5V3a2 2 0 0 1 2-2h6l2.500 2.500L9 5z" fill="#dc9a10"/><path d="M4 22v-5a2 2 0 0 1 2-2h11a2 2 0 0 1 2 2v5z" fill="#1580cc"/><path d="M8 18.500h7" stroke="#0b5da0" stroke-width="1.500"/></svg></div>
      <div><svg viewBox="0 0 24 24"><rect x="10" y="5" width="13" height="13" fill="#fff" stroke="#0f6fc0" stroke-width="1.400"/><path d="M12 10l4 4 7-7" fill="none" stroke="#0f6fc0" stroke-width="1.400"/><path d="M1 3l13-3v23L1 20z" fill="#0568bd"/><ellipse cx="7.500" cy="11.500" rx="3" ry="4" fill="none" stroke="#fff" stroke-width="2"/></svg></div>
      <div class="active"><svg viewBox="0 0 24 24" class="big"><path d="M12 12L1.600 6A12 12 0 0 1 22.400 6z" fill="#e33b2e"/><path d="M12 6h10.400A12 12 0 0 1 12 24l5-9z" fill="#fcc31e"/><path d="M1.600 6A12 12 0 0 0 12 24l5.200-9H6.800z" fill="#2da94f"/><path d="M12 6h10.400A12 12 0 0 1 12 24l5.200-9z" fill="#fcc31e"/><circle cx="12" cy="12" r="6" fill="#fff"/><circle cx="12" cy="12" r="4.700" fill="#2a7be8"/><circle cx="21" cy="3" r="8" fill="#909896"/><path d="M15.500 8.500c2-3 9-3 11 0a8 8 0 0 1-11 0z" fill="#d5d9d8"/><ellipse cx="21.500" cy="3" rx="3.600" ry="5" fill="#b98d78"/><path d="M17.500 1c0-6 8-6 8 0zM18 2h7v2h-7z" fill="#3a3c3e"/></svg><u></u></div>
      <div><svg viewBox="0 0 24 24"><rect width="24" height="24" fill="#fff"/><text x="11" y="15.500" font-size="20" font-weight="700" text-anchor="middle" fill="#111">a</text><path d="M2 17.500c6 4 12 4 18 0M17.500 16h4l-1 3.500" stroke="#f79a1c" stroke-width="2" fill="none"/></svg></div>
      <div><svg viewBox="0 0 24 24" fill="none" stroke="#1878bd" stroke-width="2.200"><circle cx="10.500" cy="10" r="5"/><path d="M14 14l5 5.500" stroke-width="2.800"/></svg></div>
      <div><svg viewBox="0 0 24 24"><circle cx="12" cy="12" r="12" fill="#0d6bfb"/><path d="M10 24v-9H7v-4h3V9c0-4 2.500-5 7-4.500V8c-2.500 0-3.400 0-3.400 2v1H17l-.6 4h-2.800v9z" fill="#fff"/></svg></div>
      <div><svg viewBox="0 0 24 24"><path d="M0 6h24v18H0z" fill="#000"/><path d="M0 8h6v10H0z" fill="#e23a35"/><path d="M6 8h6v10H6z" fill="#1d63c4"/><path d="M12 8h6v10h-6z" fill="#f5ae13"/><path d="M18 8h6v10h-6z" fill="#86b620"/><path d="M7 9c0-11 10-11 10 0" fill="none" stroke="#222" stroke-width="1.500"/></svg></div>
      <div><svg viewBox="0 0 24 24"><rect width="24" height="24" fill="#7d7d7d"/><rect x="1" y="4" width="22" height="16" rx="3" fill="#f4f4f4"/><path d="M9.500 8v8l6-4z" fill="#666"/></svg></div>
      <div><svg viewBox="0 0 24 24"><circle cx="12" cy="12" r="12" fill="#074aae"/><path d="M7 8.500h9v9" stroke="#fff" stroke-width="1.800" fill="none"/><circle cx="7" cy="8.500" r="2.400" fill="#fff"/><circle cx="15.500" cy="8.500" r="2.400" fill="#fff"/><circle cx="15.500" cy="17.500" r="2.400" fill="#fff"/></svg></div>
      <div><svg viewBox="0 0 24 24"><rect width="24" height="24" fill="#3a3a3a"/><text x="1" y="16.500" font-size="12" fill="#1fa0da">3</text><text x="7.500" y="16.500" font-size="12" fill="#fff" textLength="15">CX</text></svg><em class="sq">9</em><u class="dot"></u></div>
      <div class="teams"><svg viewBox="0 0 24 24"><circle cx="14" cy="4" r="4" fill="#7b83eb"/><path d="M7 8h12v9a6 6 0 0 1-12 0z" fill="#7279e0"/><path d="M18 9h6v7a4 4 0 0 1-6 3z" fill="#5059c9"/><rect x="0" y="6" width="12" height="12" rx="1" fill="#444bb5"/><text x="6" y="15.500" font-size="10" font-weight="700" text-anchor="middle" fill="#fff">T</text></svg><em>1</em><u class="dot red"></u></div>
    </div>
    <div class="tray">
      <svg class="ic s12 w25"><use href="#i-up"/></svg>
      <svg class="cloud" width="17" height="12" viewBox="0 0 17 12"><path d="M4 12a4 4 0 0 1-.5-7.500 5 5 0 0 1 9.500 0A3.800 3.800 0 0 1 13 12z" fill="#1583d8"/><path d="M4 12l9-7.500A3.800 3.800 0 0 1 13 12z" fill="#28a4ee"/></svg>
      <div class="kb">ITA<br>IT</div>
      <svg class="net" width="17" height="17" viewBox="0 0 17 17"><path d="M10 2H1v10h9M4 15.500h7M5.500 12v3M9.500 12v3M12 1h4v5h-4zM14 6v9h-3"/></svg>
      <svg class="vol" width="16" height="14" viewBox="0 0 16 14"><path d="M1 5h2.500L7 1.500v11L3.500 9H1zM9 5c1 1 1 3 0 4M11 3.500c2 2 2 5 0 7"/><path d="M13 2c3 3 3 7 0 10" opacity=".35"/></svg>
      <div class="clock">13:13<br>01/10/2025</div>
    </div>
  </footer>
</div>
<script src="tabs.js"></script>
</body>
</html>
```
FILE: styles.css
```css
*{box-sizing:border-box}
body{margin:0;background:#1a1c25;font-family:"Open Sans","Noto Sans",sans-serif}
.sprite{position:absolute;width:0;height:0}
.screen{width:1920px;height:1080px;display:flex;flex-direction:column;overflow:hidden}
svg{flex:none;display:block}
em,i,u{font-style:normal;text-decoration:none}

.ic{fill:none;stroke:currentColor;stroke-linecap:round;stroke-linejoin:round;stroke-width:2}
.w15{stroke-width:1.6}.w2{stroke-width:2}.w25{stroke-width:2.4}.w3{stroke-width:3}.w2s{stroke-width:1.6}
.s8{width:9px;height:9px}.s11{width:11px;height:11px}.s12{width:12px;height:12px}.s13{width:13px;height:13px}.s14{width:14px;height:14px}
.s15{width:15px;height:15px}.s16{width:16px;height:16px}.s17{width:17px;height:17px}.s18{width:18px;height:18px}.s24{width:24px;height:24px}.s32{width:32px;height:32px}
.s12.w3{stroke-width:3.4}

/* browser tab strip */
.tabstrip{height:40px;background:#fbdbeb;display:flex;align-items:center;padding-left:6px;flex:none;color:#3c2a35}
.tabsearch{width:28px;height:28px;border-radius:10px;background:#fef5fa;display:flex;align-items:center;justify-content:center;margin-right:3px;color:#1d1b1e}
.tabsearch .ic{width:10px;height:10px}
.tabs{display:flex}
#tabs-left{width:578.5px}#tabs-mid{width:211px}#tabs-right{width:837px;margin-left:3px}
.tab{flex:1 1 0;min-width:0;height:16px;display:flex;justify-content:center;border-right:2px solid #fbb4e0}
.tab svg{width:16px;height:16px;margin-right:-1px;color:#5f6368}
.fav-hz{width:16px;height:16px;border-radius:50%;background:linear-gradient(#156b83 55%,#1fb46a 55%);color:#f3f3a0;font:700 8px/16px "Liberation Sans",sans-serif;text-align:center;letter-spacing:-.3px}
.fav-mb{width:16px;height:16px;background:#6d0d17;color:#ecdcd0;font:700 9px/16px "Liberation Serif",serif;text-align:center;letter-spacing:-.8px}
.tab-active{width:32px;height:34px;margin-top:6px;background:#fff8f9;border-radius:10px 10px 0 0;display:flex;align-items:center;justify-content:center;padding-bottom:6px;color:#1d1b1e;position:relative}
.tab-active .ic{width:9px;height:9px}
.tab-active::before,.tab-active::after{content:"";position:absolute;bottom:0;width:9px;height:9px}
.tab-active::before{left:-9px;background:radial-gradient(circle at 0 0,transparent 9px,#fff8f9 9.5px)}
.tab-active::after{right:-9px;background:radial-gradient(circle at 100% 0,transparent 9px,#fff8f9 9.5px)}
.newtab{margin-left:10px;width:11px;height:11px}
.wincontrols{margin-left:auto;margin-right:17px;display:flex;gap:35px}
.wincontrols svg{fill:none;stroke:#1b1b1b;stroke-width:1.1}

/* address row */
.toolbar{height:46px;background:#fff8f9;border-radius:8px 8px 0 0;box-shadow:0 -8px 0 #fbdbeb;display:flex;align-items:center;padding-left:14px;flex:none;color:#4f3f4a}
.toolbar>.ic{margin-right:19px}
.toolbar>.faded{color:#b9a9b4}
.toolbar>.ic:nth-child(3){margin-right:17px}
.omnibox{width:1662px;height:34px;border-radius:17px;background:#e5d9e2;display:flex;align-items:center;padding-left:5px}
.tune{width:24px;height:24px;border-radius:50%;background:#fff8f9;display:flex;align-items:center;justify-content:center;color:#1d1b1e}
.url{margin-left:8px;font-size:14px;letter-spacing:-.37px;color:#574954;flex:1}
.url b{font-weight:400;color:#1f1a1d}
.install{margin-right:14px}
.fav{color:#8a4c78;margin-right:15px}
.toolbar>.ext{margin:0 17px}
.vsep{width:2px;height:16px;background:#fbd9ec}
.avatar{width:20px;height:20px;margin:0 24px 0 16px}
.dots{fill:#4f3f4a}

.bookmarks{height:35px;background:#fff8f9;border-bottom:1px solid #f6dbe9;padding:0 0 7px 13px;display:flex;align-items:center;flex:none;color:#463c43}
.apps{fill:none;stroke:#463c43;stroke-width:1.6;margin-right:14px}
.bookmarks .vsep{margin-right:15px}
.bm{display:flex;align-items:center;flex:0 0 154px;font-size:12px;letter-spacing:-.24px;white-space:nowrap}
.bm.first{flex-basis:96px;letter-spacing:-.5px}.bm.go{flex-basis:108px;letter-spacing:-.2px}.bm.jd{flex-basis:99px}
.bm svg{margin-right:6px}
.bm.first svg{margin-right:7px;color:#3c3c40}
.bi{width:16px;height:16px}
.bi.dk{color:#3c3c40}
.more{margin-left:130px}

/* workspace */
.replit{height:911px;background:#1a1c25;color:#d3d5da;font-family:Roboto,"Liberation Sans",sans-serif;font-size:14px;display:flex;flex-direction:column;flex:none}
.topbar{height:40px;display:flex;align-items:center;flex:none}
.brand{width:461px;display:flex;align-items:center;padding-left:16px;color:#f4f5f7}
.logo{margin-top:-2px}
.chev{margin:0 16px 0 4px;color:#8f939d}
.appname{margin:0 15px 0 7px;font-weight:400;letter-spacing:.13px}
.square{width:12px;height:12px;background:#a4a8ae;border:1.5px solid #6a55d6;border-radius:2px}
.wtabs{display:flex;align-items:center;gap:4px}
.wt{width:146px;height:28px;border-radius:4px;display:flex;align-items:center;padding:0 9px 0 8px;color:#9da1a9}
.wt span{flex:1;margin-left:6px;white-space:nowrap}
.wt>.ic:first-child{width:15px}
.wt.on{background:#23252e;color:#f4f5f7}
.wt.on>.ic:first-child{color:#c9ccd2}
.wt .cl{color:#656973}
.wt .green{color:#4fb96d}.wt .olive{color:#b09b2d}.wt .yellow{color:#d8bd58}
.addpane{margin-left:8px;color:#7f838d}
.actions{margin-left:auto;display:flex;align-items:center;padding-right:13px;color:#c7cad1}
.invite{margin:0 10px 0 17px}
.republish{width:88px;height:28px;border-radius:4px 0 0 4px;background:#23252e;display:flex;align-items:center;padding-left:9px;gap:5px;font-size:12px;font-weight:500;color:#eceef1}
.republish .ic{width:11px}
.copybtn{width:22px;height:28px;margin-left:1px;border-radius:0 4px 4px 0;background:#23252e;display:flex;align-items:center;justify-content:center;margin-right:10px}

.workspace{display:flex;flex:1}
.agent{width:462px;flex:none;line-height:22.4px;white-space:nowrap}
.ahead{height:36px;display:flex;align-items:center;padding-left:14px;color:#c3c6cd}
.atitle{margin-left:38px;width:266px;font-weight:400;letter-spacing:.08px;color:#e4e6ea}
.pill{margin-left:6px;width:68px;height:24px;border-radius:12px;background:#33220f;color:#ffb76b;font-size:12px;font-weight:400;display:flex;align-items:center;gap:4px;padding-left:5px}
.newchat{margin-left:25px}
.dim{color:#7d818b}.dim2{color:#9a9ea7}
.cut{height:13px;width:442px;margin-left:10px;background:#23252e;border-radius:0 0 8px 8px}
.evt{height:24px;display:flex;align-items:center;color:#b4b7be;padding-left:15px}
.evt .ic{color:#8b8f98}
.evt span{margin-left:5px}
.evt code{font-family:"DejaVu Sans Mono",monospace;font-size:13px}
.agent .e1{margin-top:13px}
.agent .pa{margin-top:13.4px}
.agent .e2{margin-top:14px;color:#9194a0}
.agent .e3{margin-top:8px}
.e3 span{margin-left:6px}
.agent p,.agent h4{margin:15.500px 0 0 16px;font-size:14px;letter-spacing:.08px}
.agent .pb{margin-top:14.600px}
.agent h4,.agent b{font-weight:700;letter-spacing:.22px}
.agent h4{margin-top:15px;margin-bottom:4.400px}
.agent p b{letter-spacing:.17px}
.agent ol li:first-child b{letter-spacing:.34px}
.em{font-family:"Noto Color Emoji",sans-serif;font-size:12.500px;display:inline-block;width:20px;margin-left:2.500px;line-height:14px;font-weight:400}
.wave{margin-left:1px}
.ck{width:14px;height:14px;display:inline-block;vertical-align:-2px;margin:0 5.500px 0 3px}
.agent ol,.agent ul{margin:0;padding:0 0 0 32px;letter-spacing:.1px}
.agent li{margin-bottom:3.900px}
.agent ul li{margin-bottom:4.300px}
.agent li:last-child{margin-bottom:0}
.agent ol{list-style:none;counter-reset:n}
.agent ul{list-style:none}
.agent ol li::before{counter-increment:n;content:counter(n) ".";display:inline-block;width:16px;margin-left:-16px}
.agent ul li::before{content:"";display:inline-block;width:5px;height:5px;border-radius:50%;background:#d3d5da;margin:0 11px 3px -16px}
.status{margin-top:17.300px;height:24px;display:flex;align-items:center;justify-content:space-between;padding:0 25.500px 0 18px;font-size:12px}
.working{color:#c4abf5;font-weight:500}
.stop{display:flex;align-items:center;gap:6px}
.stop i{width:9px;height:9px;border:1px solid #a6a9b1;border-radius:2px}
.composer{margin:8px 0 0 6px;width:450px;height:75px;border:1px solid #383b47;border-radius:6px;background:#23252e;padding:8px 6px 0}
.ph{padding-left:4px;color:#9194a0;letter-spacing:.09px}
.crow{display:flex;align-items:center;margin-top:13px;height:24px;color:#b4b7be}
.build{width:80px;height:24px;border-radius:4px;background:#282a35;display:flex;align-items:center;padding-left:5px;font-size:12px;font-weight:500;color:#e4e6ea;gap:5px;margin-right:9px}
.build .dim2{margin-left:auto;margin-right:6px}
.clip{margin-left:13px}
.tunei{margin:0 18px 0 auto}
.crow>.dim{margin-right:6px;width:13px;height:13px}

/* preview pane */
.preview{width:1452px;height:865px;border:1px solid #6f55ee;border-radius:4px;background:#fff;overflow:hidden;display:flex;flex-direction:column}
.pbar{height:35px;background:#1a1c25;display:flex;align-items:center;padding:0 0 1px 9px;flex:none;color:#d3d5da}
.pbar>.ic:nth-child(1){margin-right:16px}.pbar>.ic:nth-child(2){margin-right:14px;}
.pbar>.ic:nth-child(3){margin-right:8px}
.purl{width:1279px;height:24px;border-radius:4px;background:#23252e;display:flex;align-items:center;padding-left:5px;gap:2px;color:#9194a0;margin-right:9px;letter-spacing:-.44px}
.purl b{font-weight:400;color:#f4f5f7}
.wr{position:relative;margin:0 12px}
.wr em{position:absolute;left:4px;top:-7px;width:14px;height:14px;border-radius:50%;background:#ff5b5b;color:#3a1014;font-size:11px;line-height:14px;text-align:center;letter-spacing:0}
.apphead{height:96px;background:#5a6920;display:flex;padding-left:33px;color:#fff;font-family:"Open Sans","Noto Sans",sans-serif;box-shadow:0 2px 8px rgba(0,0,0,.22);flex:none;position:relative}
.ident{width:484px;height:70px;margin-top:13px;border:1px solid rgba(255,255,255,.3);border-radius:6px;display:flex;align-items:center;padding-left:8px;gap:8px}
.gtitle{font-size:20px;line-height:27px;font-weight:600;letter-spacing:-.69px}
.grow{display:flex;align-items:center;height:24px;margin-top:-1px}
.badge{width:70px;height:24px;border-radius:12px;background:#a855f7;font-size:12px;font-weight:600;letter-spacing:-.6px;text-align:center;line-height:24px}
.cliente{margin:0 8px 0 9px;color:#4b5563;font-size:14px;letter-spacing:-.46px}
.mail{font-size:14px;font-weight:600;letter-spacing:-.48px}
.anav{margin:8px 0 0 158px;width:646px}
.nrow{display:flex;height:36px;align-items:center}
.r1{margin-bottom:4px;padding-left:11px}
.r1 .nb{padding-bottom:1px}
.nb{height:36px;display:flex;align-items:center;gap:12px;padding-left:8px;border-radius:6px;font-size:14px;font-weight:600;letter-spacing:-.44px;white-space:nowrap;width:112px}
.n-home{width:94.500px}.n-cal{width:127px}.n-cli{width:99px}
.cur{width:125px;background:#f5f5f5;color:#18181b;font-weight:500;letter-spacing:-.16px;margin-right:12px}
.cyan{color:#22d3ee}.gold{color:#eab020}
.n-pro{width:84px}.n-imp{width:128px}
.lang{display:flex;align-items:center;font-size:14px;font-weight:600;letter-spacing:-.54px;gap:4px;margin:3px 0 0 10px}
.lang .s11{color:#c5cbaf;margin-left:-1px}
.esci{width:96px;height:40px;margin-top:28px;border-radius:6px;background:#f5f5f5;color:#18181b;display:flex;align-items:center;justify-content:space-between;padding:0 21px 0 22px;font-size:14px;font-weight:500;letter-spacing:-.5px}

.chat{width:864px;margin:0 0 0 293px;font-family:"Open Sans","Noto Sans",sans-serif;color:#09090b}
.chat h1{margin:41px 0 0;height:36px;display:flex;align-items:center;gap:8px;font-size:30px;line-height:36px;font-weight:700;letter-spacing:-1.020px}
.chat h1 svg{color:#a855f7}
.chat .sub{margin:7px 0 0;font-size:16px;line-height:24px;color:#71717a;letter-spacing:-.39px;white-space:nowrap}
.card{margin-top:24px;height:500px;border:1px solid #e4e4e7;border-radius:8px;padding:16px;box-shadow:0 1px 2px rgba(0,0,0,.06)}
.msg{display:flex;gap:12px;margin-bottom:16px;font-size:14px;line-height:20px;letter-spacing:-.25px}
.msg.me{justify-content:flex-end;padding-right:16px;letter-spacing:-.37px}
.bub{border-radius:8px;background:#f4f4f5;padding:12px}
.me .bub{background:#5a6920;color:#fff;width:357px;white-space:nowrap}
.wide{width:570px}
.bub small{display:block;font-size:12px;line-height:16px;margin-top:4px;letter-spacing:-.5px;color:#6a6a6e}
.me .bub small{color:#c5cbaf}
.av{width:32px;height:32px;border-radius:50%;background:#a855f7;color:#fff;display:flex;align-items:center;justify-content:center;flex:none}
.me .av{background:#3b82f6}
.entry{display:flex;gap:8px;margin-top:16px}
.inp{width:808px;height:40px;border:1px solid #e4e4e7;border-radius:6px;padding-left:12px;font-size:14px;line-height:39px;color:#71717a;letter-spacing:-.28px}
.sendb{width:48px;height:40px;border-radius:6px;background:#adb490;color:#fff;display:flex;align-items:center;justify-content:center}

/* Windows taskbar */
.taskbar{height:48px;border-top:1px solid #b9b6ae;padding-bottom:1px;display:flex;align-items:center;flex:none;color:#1b1b1b;background:linear-gradient(90deg,#ebecd9 0,#e8ebe2 180px,#e5eae6 400px,#dde5ef 520px,#eee6d0 690px,#e7eadd 860px,#eceacc 1000px,#ebe9d4 1250px,#ede8dc 1420px,#e7ecde 1600px,#dfecee 1740px,#dde7f3 1920px)}
.weather{display:flex;align-items:center;padding-left:18px;width:551px}
.wicon{position:relative;width:33px}
.wicon em,.tapps em{position:absolute;width:16px;height:16px;border-radius:50%;background:#c42b1c;color:#fff;font-size:10.500px;line-height:16px;text-align:center}
.wicon em{left:12px;top:-1px}
.wtext{display:flex;flex-direction:column;font-size:12px;line-height:16px;letter-spacing:-.25px}
.wtext b{font-weight:400;letter-spacing:-.5px}
.wtext span{color:#5c5c5a}
.tsearch{margin-left:14px;width:218px;height:31px;border-radius:16px;background:#faf9f4;box-shadow:0 0 0 1px rgba(0,0,0,.06),0 1px 1px rgba(0,0,0,.2);display:flex;align-items:center;padding-left:11px;gap:10px;font-size:14px;letter-spacing:-.5px;color:#5d5d5a}
.tsearch .ic{color:#222}
.tapps{display:flex;margin-left:2px}
.tapps>div{width:40px;height:39px;margin:0 2.060px;border-radius:4px;display:flex;align-items:center;justify-content:center;position:relative}
.tapps svg{width:24px;height:24px;overflow:visible}
.tapps .active{background:#f6f5ee;box-shadow:0 0 0 1px rgba(0,0,0,.05)}
.tapps .teams{background:#ebafab}
.tapps u{position:absolute;bottom:0;left:12px;width:16px;height:3px;border-radius:2px;background:#4f4f4f}
.tapps u.dot{width:6px;left:17px;bottom:1px;background:#8a8a80}
.tapps u.red{background:#c42b1c}
.tapps em{right:3px;top:3px}
.tapps em.sq{border-radius:0;background:#0596d8;right:3px;font-size:12px}
.tray{margin-left:auto;margin-right:19px;display:flex;align-items:center;font-size:12px;line-height:16px;letter-spacing:-.2px}
.cloud{margin:0 20px 0 18px}
.kb{width:18px;text-align:center;letter-spacing:-.4px}
.net{margin:0 7px 0 20px}
.net,.vol{fill:none;stroke:#1b1b1b;stroke-width:1.2}
.clock{text-align:right;margin-left:18px}
```
FILE: tabs.js
```js
// Favicons of the open tabs, in strip order; "-" is a tab with no icon.
const strips = {
  'tabs-left': 'chrome chrome dee globe globe - globe globe globe globe globe globe pdf globe globe globe globe globe globe pdf pdf pdf globe globe globe globe hz globe globe',
  'tabs-mid': 'globe globe globe globe globe globe globe globe globe globe globe',
  'tabs-right': 'replit globe globe globe globe globe globe globe globe - globe globe pdf globe globe globe pdf globe pdf globe globe globe goog dee globe insta globe globe vee globe globe down globe globe gmail pdf globe globe globe mb goog pee canva playfav'
};
const lettered = { hz: 'HZ', mb: 'MB' };
const icon = name =>
  name === '-' ? '' :
  lettered[name] ? `<span class="fav-${name}">${lettered[name]}</span>` :
  `<svg><use href="#${name}"/></svg>`;
for (const [id, names] of Object.entries(strips)) {
  document.getElementById(id).innerHTML =
    names.split(' ').map(name => `<div class="tab">${icon(name)}</div>`).join('');
}
```
